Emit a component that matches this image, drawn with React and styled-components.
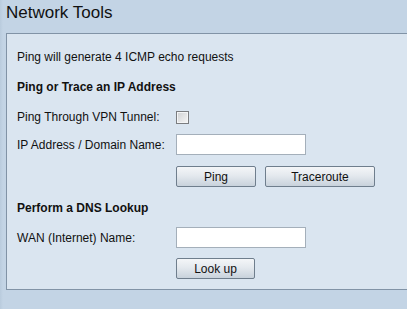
import React from "react";
import styled, { createGlobalStyle } from "styled-components";

const GlobalStyle = createGlobalStyle`
  html, body {
    margin: 0;
    padding: 0;
    background: #c3d4e5;
    font-family: Arial, "Liberation Sans", sans-serif;
  }
`;

const Page = styled.div`
  width: 407px;
  height: 309px;
  overflow: hidden;
  background: linear-gradient(to right, #b9cbdd 0px, #c3d4e5 3px);
`;

const Title = styled.h1`
  margin: 0;
  padding: 3px 0 0 6px;
  height: 30px;
  box-sizing: border-box;
  font-size: 17px;
  font-weight: normal;
  color: #111;
  line-height: 20px;
`;

const Panel = styled.div`
  margin-left: 6px;
  border-top: 1px solid #8193a6;
  border-left: 1px solid #8193a6;
  border-bottom: 1px solid #8193a6;
  background: #dae5f0;
  padding: 13px 0 10px 10px;
  display: flex;
  flex-direction: column;
  color: #111;
  font-size: 12px;
  margin-top: 3px;
`;

const Line = styled.div`
  height: 20px;
  line-height: 20px;
  margin-top: ${(p) => p.$top || 0}px;
  font-weight: ${(p) => (p.$bold ? "bold" : "normal")};
`;

const Row = styled.div`
  display: grid;
  grid-template-columns: 159px 1fr;
  align-items: center;
  height: ${(p) => p.$h || 21}px;
  margin-top: ${(p) => p.$top || 0}px;
`;

const Buttons = styled.div`
  display: flex;
  gap: 9px;
  padding-left: 159px;
  margin-top: ${(p) => p.$top || 0}px;
`;

const Check = styled.input.attrs({ type: "checkbox" })`
  appearance: none;
  margin: 0;
  width: 13px;
  height: 13px;
  border: 1px solid #7b7d80;
  box-sizing: border-box;
  background: linear-gradient(135deg, #cfd1d3, #f6f6f6);
  box-shadow: inset 0 0 0 1px #f4f5f6;
`;

const TextBox = styled.input.attrs({ type: "text" })`
  width: 130px;
  height: 21px;
  box-sizing: border-box;
  border: 1px solid #a4afba;
  background: #fff;
  margin: 0;
  padding: 1px 3px;
  font-size: 12px;
`;

const Button = styled.button`
  width: ${(p) => p.$w}px;
  height: 21px;
  margin: 0;
  padding: 0;
  box-sizing: border-box;
  border: 1px solid #6f7e8d;
  border-radius: 2px;
  background: linear-gradient(to bottom, #f4f6f8 0%, #e4e9ee 45%, #c8d2dc 100%);
  font-family: Arial, "Liberation Sans", sans-serif;
  font-size: 12px;
  color: #111;
  cursor: pointer;
`;

const App = () => {
  return (
    <Page>
      <GlobalStyle />
      <Title>Network Tools</Title>
      <Panel>
        <Line>Ping will generate 4 ICMP echo requests</Line>
        <Line $top={10} $bold>
          Ping or Trace an IP Address
        </Line>
        <Row $h={20} $top={10}>
          <span>Ping Through VPN Tunnel:</span>
          <Check />
        </Row>
        <Row $top={7}>
          <span>IP Address / Domain Name:</span>
          <TextBox />
        </Row>
        <Buttons $top={11}>
          <Button $w={80}>Ping</Button>
          <Button $w={110}>Traceroute</Button>
        </Buttons>
        <Line $top={11} $bold>
          Perform a DNS Lookup
        </Line>
        <Row $top={9}>
          <span>WAN (Internet) Name:</span>
          <TextBox />
        </Row>
        <Buttons $top={10}>
          <Button $w={79}>Look up</Button>
        </Buttons>
      </Panel>
    </Page>
  );
};

export default App;
